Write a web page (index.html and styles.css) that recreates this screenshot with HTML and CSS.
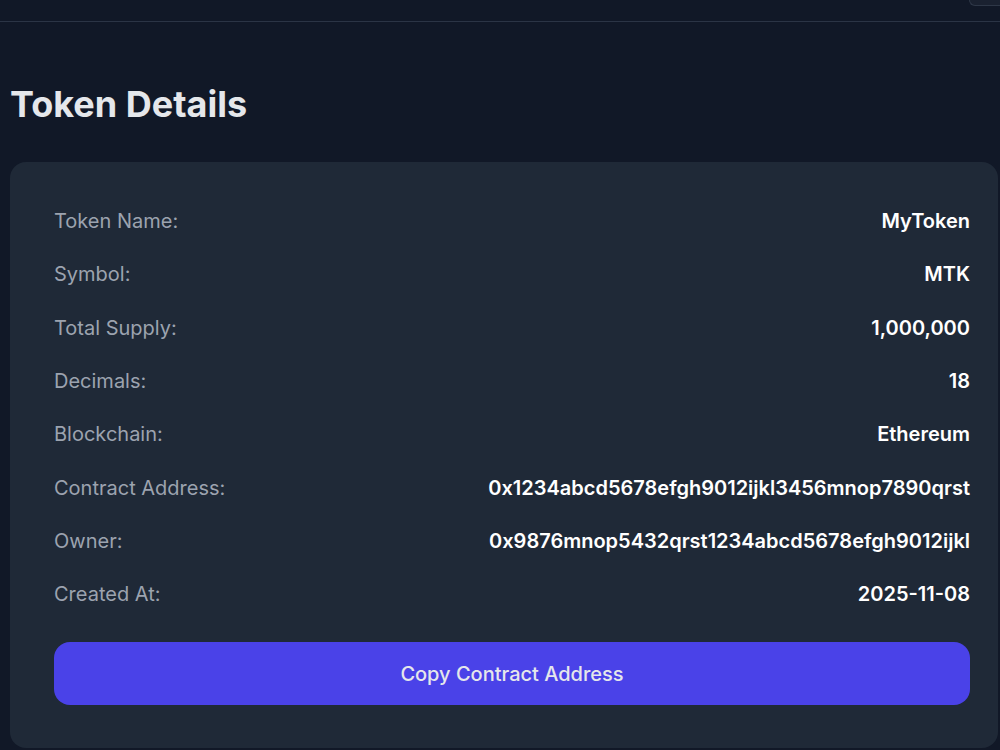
FILE: index.html
```html
<!DOCTYPE html>
<html lang="en">
<head>
    <meta charset="UTF-8">
    <meta name="viewport" content="width=device-width, initial-scale=1.0">
    <title>Token Details</title>
    <link rel="stylesheet" href="styles.css">
</head>
<body>
    <header class="topbar">
        <div class="top-action"></div>
    </header>

    <main class="page">
        <h1>Token Details</h1>

        <section class="card">
            <div class="details">
                <div class="row"><span class="label">Token Name:</span><span class="value">MyToken</span></div>
                <div class="row"><span class="label">Symbol:</span><span class="value">MTK</span></div>
                <div class="row"><span class="label">Total Supply:</span><span class="value">1,000,000</span></div>
                <div class="row"><span class="label">Decimals:</span><span class="value">18</span></div>
                <div class="row"><span class="label">Blockchain:</span><span class="value">Ethereum</span></div>
                <div class="row"><span class="label">Contract Address:</span><span class="value">0x1234abcd5678efgh9012ijkl3456mnop7890qrst</span></div>
                <div class="row"><span class="label">Owner:</span><span class="value">0x9876mnop5432qrst1234abcd5678efgh9012ijkl</span></div>
                <div class="row"><span class="label">Created At:</span><span class="value">2025-11-08</span></div>
            </div>
            <button type="button" class="copy-btn">Copy Contract Address</button>
        </section>
    </main>
</body>
</html>
```

FILE: styles.css
```css
html, body {
    margin: 0;
    padding: 0;
}
body {
    font-family: 'Inter', 'Noto Sans', sans-serif;
    background-color: #111827;
    color: #e5e7eb;
    overflow: hidden;
}
.topbar {
    height: 21px;
    border-bottom: 1px solid #2b3445;
    display: flex;
    justify-content: flex-end;
    align-items: flex-start;
}
.top-action {
    width: 30px;
    height: 5px;
    background: #1a2130;
    border: 1px solid #2e3747;
    border-top: none;
    border-right: none;
    border-radius: 0 0 0 6px;
}
.page {
    padding: 0 2px 0 10px;
}
h1 {
    font-size: 36px;
    font-weight: 700;
    line-height: 40px;
    color: #e5e7eb;
    margin: 62px 0 38px 0;
}
.card {
    background: #1f2937;
    border-radius: 16px;
    padding: 45px 28px 43px 44px;
}
.details {
    display: flex;
    flex-direction: column;
    gap: 25.33px;
}
.row {
    display: flex;
    justify-content: space-between;
    align-items: center;
    line-height: 28px;
    font-size: 20px;
}
.label {
    color: #9ca3af;
}
.value {
    color: #ffffff;
    font-weight: 600;
}
.copy-btn {
    display: block;
    width: 100%;
    height: 63px;
    margin-top: 34px;
    border: none;
    border-radius: 16px;
    background: #4a42e8;
    color: #e5e7eb;
    font-family: inherit;
    font-size: 20px;
    font-weight: 500;
    cursor: pointer;
}
```
